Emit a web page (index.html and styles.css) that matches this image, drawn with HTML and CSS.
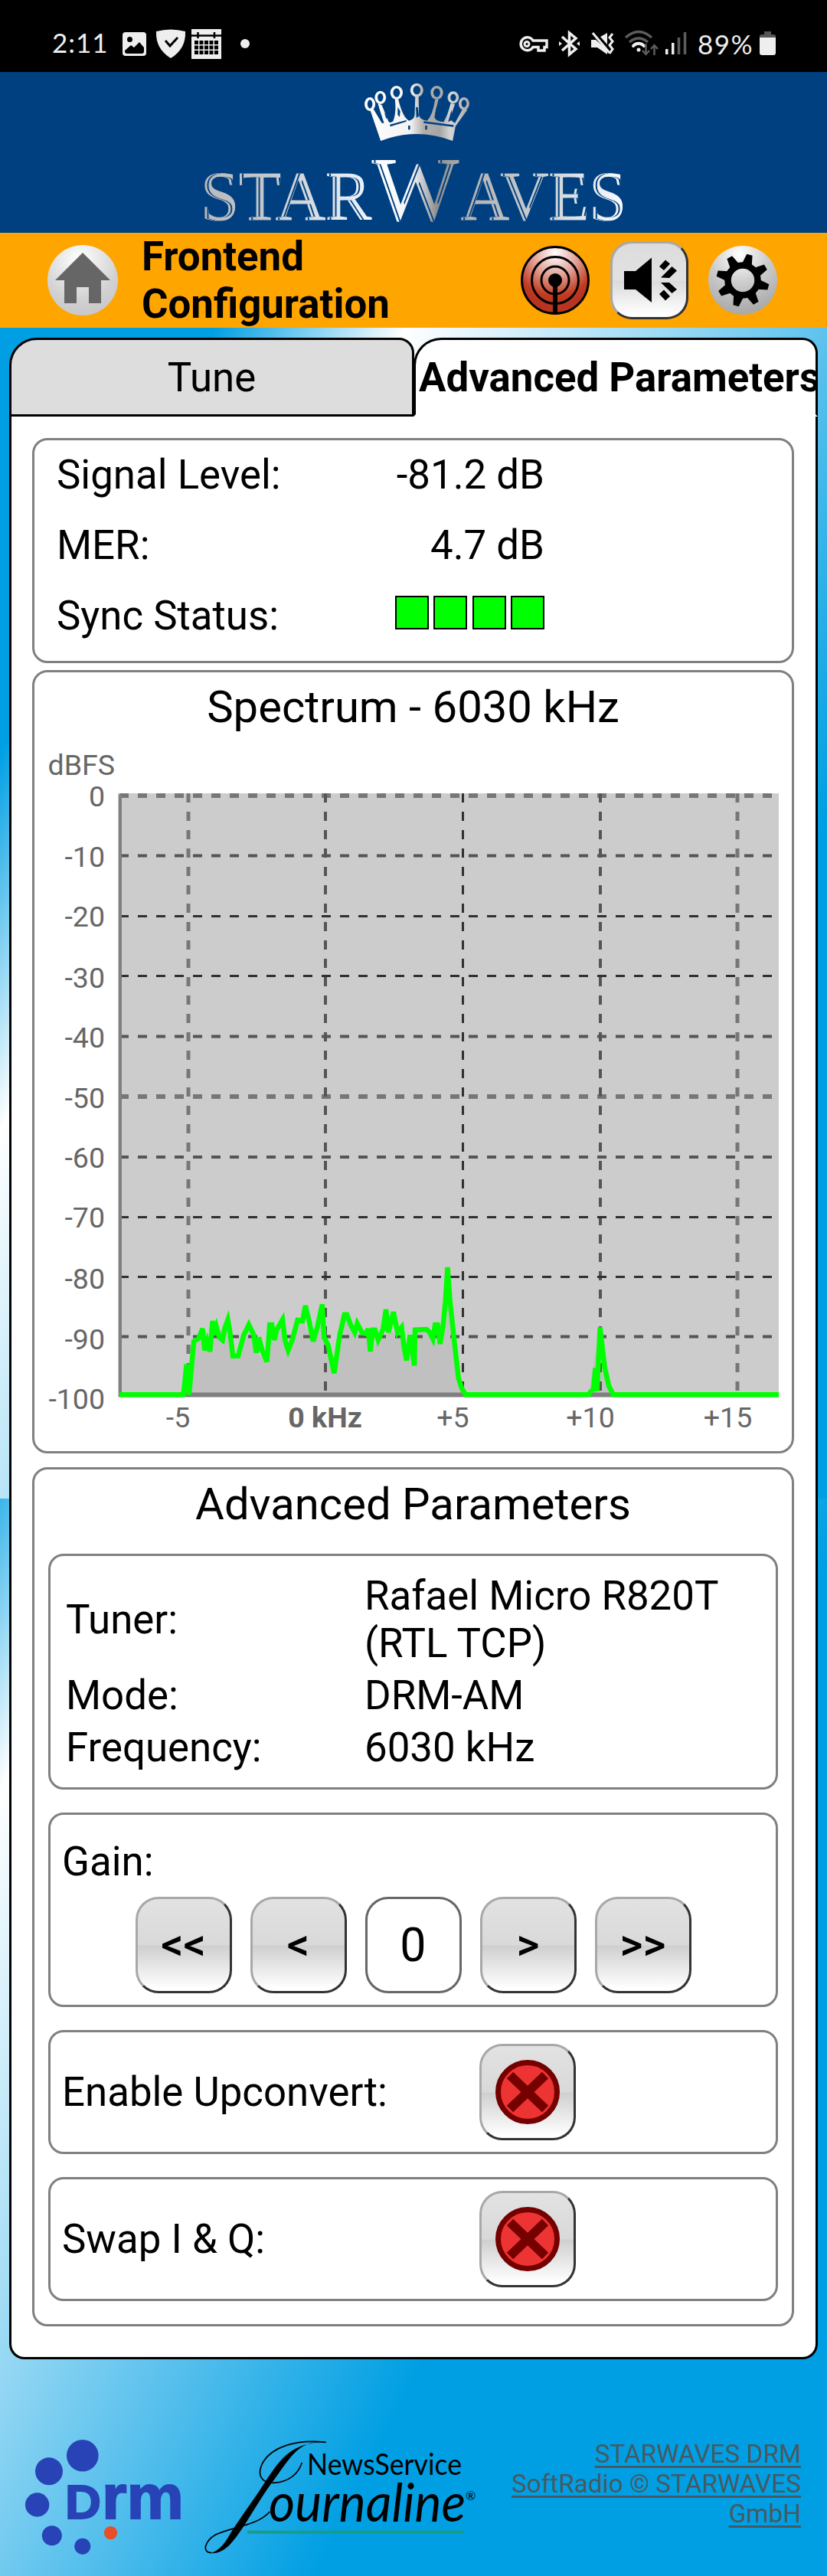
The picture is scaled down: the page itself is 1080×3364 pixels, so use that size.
FILE: index.html
```html
<!DOCTYPE html>
<html lang="en">
<head>
<meta charset="utf-8">
<title>Frontend Configuration</title>
<link rel="stylesheet" href="styles.css">
</head>
<body>
<div class="status">
  <span class="clock">2:11</span>
  <svg class="status-left" viewBox="160 36 168 44" width="168" height="44">
    <g fill="#eee">
      <rect x="160" y="42" width="31" height="31" rx="4"/>
      <path d="M204 41Q223 36 242 41Q243 64 223 76Q203 64 204 41Z"/>
      <rect x="250" y="38" width="39" height="39"/>
      <circle cx="320" cy="57" r="6"/>
    </g>
    <circle cx="169.500" cy="51.500" r="3.500"/>
    <path d="M163 66L171 59L175 62L182 55L188 62V67Q188 70 185 70H166Q163 70 163 67Z"/>
    <path d="M216 53L222 60L232 49" fill="none" stroke="#000" stroke-width="3"/>
    <path d="M250 46.500H289M258.500 42V50M280 42V50" stroke="#000" stroke-width="2.500"/>
    <path d="M254 55.500H285M254 62H285M254 68.500H285" stroke="#000" stroke-width="5" stroke-dasharray="5 1.500"/>
  </svg>
  <svg class="status-right" viewBox="676 38 224 36" width="224" height="36">
    <g fill="none" stroke="#eee" stroke-width="3.500">
      <path d="M696 53A8.500 8.500 0 1 0 696 61.500H703V66H711V61.500H714V53Z"/>
      <circle cx="688" cy="57.500" r="3" stroke-width="3"/>
      <path d="M734 48L752 64L743.500 71V43L752 50L734 66"/>
      <path d="M800 44L796 49L800 54L796 59L800 64L796 70" stroke-width="3"/>
      <path d="M774 43L796 69" stroke-width="3"/>
      <path d="M827 60A9 9 0 0 1 841 60" stroke-linecap="round" stroke-width="4"/>
    </g>
    <g fill="#eee">
      <path d="M730 54L734 57L730 60ZM757 54L753 57L757 60Z"/>
      <path d="M772 52H778L793 65V71L780 62H772ZM784 48L793 43V58Z"/>
      <circle cx="834" cy="65" r="2.500"/>
      <rect x="869" y="64" width="3.500" height="7"/><rect x="877" y="56" width="3.500" height="15"/>
    </g>
    <g fill="none" stroke="#5c5c5c" stroke-width="3.500">
      <path d="M817 49Q834 34 851 49M822 55Q834 45 846 55"/>
      <path d="M843.500 57V70M839 66L843.500 71L848 66M854.500 72V60M850 64L854.500 59L859 64" stroke-width="2.500"/>
      <path d="M886.500 49V71M894.500 42V71"/>
    </g>
  </svg>
  <span class="percent">89%</span>
  <svg class="battery" viewBox="992 41 21 31" width="21" height="31">
    <path d="M992 50V47Q992 45 995 45H998V41H1007V45H1010Q1013 45 1013 47V50Z" fill="#555"/>
    <path d="M992 49H1013V69Q1013 72 1010 72H995Q992 72 992 69Z" fill="#eee"/>
  </svg>
</div>

<div class="brand">
  <svg viewBox="250 94 580 210" width="580" height="210">
    <defs>
      <linearGradient id="silver" gradientUnits="userSpaceOnUse" x1="265" y1="0" x2="815" y2="0">
        <stop offset="0" stop-color="#b9b9bb"/><stop offset=".15" stop-color="#c4c8cd"/><stop offset=".38" stop-color="#eaf1f8"/>
        <stop offset=".43" stop-color="#fff"/><stop offset=".5" stop-color="#eef1f4"/><stop offset=".555" stop-color="#8e8e8e"/>
        <stop offset=".62" stop-color="#b0b0b0"/><stop offset=".8" stop-color="#c9ced4"/><stop offset="1" stop-color="#f8fbff"/>
      </linearGradient>
      <linearGradient id="crown" gradientUnits="userSpaceOnUse" x1="610" y1="0" x2="980" y2="0">
        <stop offset="0" stop-color="#fff"/><stop offset=".44" stop-color="#f3f3f3"/><stop offset=".56" stop-color="#b5b0ac"/>
        <stop offset=".72" stop-color="#a5a5a5"/><stop offset=".82" stop-color="#d5d5d5"/><stop offset="1" stop-color="#ababab"/>
      </linearGradient>
      <filter id="inline" x="-5%" y="-5%" width="110%" height="110%">
        <feOffset in="SourceAlpha" dx="3.200" result="a"/>
        <feOffset in="SourceAlpha" dx="4.600" result="b"/>
        <feComposite in="a" in2="b" operator="out" result="band"/>
        <feComposite in="SourceGraphic" in2="band" operator="out"/>
      </filter>
    </defs>
    <g transform="translate(250 90) scale(.37 .3333)">
      <path fill="url(#crown)" d="M668 282Q795 228 922 282L932 225L974 160L958 155L930 212Q912 200 914 190L930 138L915 134Q905 180 890 208Q862 205 858 190Q864 150 872 120L860 120Q852 180 832 203Q806 200 803 180L802 108H790L788 180Q786 198 768 203Q745 190 730 118L718 118Q724 170 712 205Q700 215 695 205L672 142L658 134Q668 180 672 208L650 160L630 158Z"/>
      <path fill="#004080" d="M644 160L660 145L680 212H672ZM680 170L692 190L688 196ZM728 150L737 165L735 188L728 180ZM792 150H799L803 185L794 192ZM864 150L866 185L858 190ZM918 160L920 200L906 208ZM765 222H772V238H765ZM825 222H832V238H825ZM700 218L760 200L757 207L702 226ZM820 205L925 220V227L820 212Z"/>
      <g fill="#004080" stroke="url(#crown)" stroke-width="10">
        <ellipse cx="630" cy="138" rx="14" ry="22"/><ellipse cx="667" cy="112" rx="15" ry="21"/><ellipse cx="724" cy="93" rx="17" ry="22"/>
        <ellipse cx="795.500" cy="83" rx="18" ry="22"/><ellipse cx="866" cy="93" rx="17" ry="22"/><ellipse cx="924" cy="112" rx="15" ry="19"/><ellipse cx="962" cy="136" rx="14" ry="20"/>
      </g>
    </g>
    <g class="brand-text" fill="url(#silver)" stroke="url(#silver)" stroke-width="1.200" filter="url(#inline)">
      <text x="262" y="287" font-size="90" textLength="223" lengthAdjust="spacingAndGlyphs">STAR</text>
      <text x="486" y="287" font-size="119" textLength="113" lengthAdjust="spacingAndGlyphs">W</text>
      <text x="602" y="287" font-size="90" textLength="216" lengthAdjust="spacingAndGlyphs">AVES</text>
    </g>
  </svg>
</div>

<header class="bar">
  <svg class="home" viewBox="61 319 94 94" width="94" height="94">
    <defs><radialGradient id="hg" cx=".45" cy=".2" r=".8"><stop offset="0" stop-color="#fff"/><stop offset=".7" stop-color="#d2d2d2"/><stop offset="1" stop-color="#c8c8c8"/></radialGradient></defs>
    <circle cx="108" cy="366" r="46" fill="url(#hg)"/>
    <path d="M108 330L144 366H132V396H116V375H100V396H84V366H72Z" fill="#666"/>
  </svg>
  <h1>Frontend<br>Configuration</h1>
  <div class="tools">
    <svg viewBox="680 320 92 92" width="92" height="92">
      <defs><radialGradient id="ag" cx=".5" cy=".1" r=".75"><stop offset="0" stop-color="#fff"/><stop offset=".45" stop-color="#e2a094"/><stop offset=".85" stop-color="#c23a20"/><stop offset="1" stop-color="#b83420"/></radialGradient></defs>
      <g fill="none" stroke="#000" stroke-width="3">
        <circle cx="726" cy="366" r="43.500" fill="url(#ag)"/><circle cx="726" cy="366" r="30.500"/><circle cx="726" cy="366" r="18"/>
        <path d="M726 366V410" stroke-width="6"/>
      </g>
      <circle cx="726" cy="366" r="9"/>
    </svg>
    <div class="key sound">
      <svg viewBox="802 319 94 94" width="94" height="94">
        <path d="M816 354H831L852 336.500V395L831 378H816ZM862 348L870 339.500L876 344.500L868 353ZM864 362.500L878.500 348L885 353.500L875 363ZM864 369L875 369L885 378L878.500 383ZM862 384L868 378.500L876 387L870 392.500Z"/>
      </svg>
    </div>
    <svg viewBox="926 320 92 92" width="92" height="92">
      <defs><radialGradient id="gg" cx=".45" cy=".12" r=".85"><stop offset="0" stop-color="#fff"/><stop offset=".5" stop-color="#ccc"/><stop offset="1" stop-color="#aaa"/></radialGradient></defs>
      <circle cx="972" cy="366" r="45" fill="url(#gg)"/>
      <circle cx="972" cy="366" r="19.500" fill="none" stroke="#000" stroke-width="8.500"/>
      <g transform="translate(972 366) rotate(15)">
        <path id="tooth" d="M-6.500 -21L-3.800 -34.500H3.800L6.500 -21Z"/>
        <use href="#tooth" transform="rotate(45)"/><use href="#tooth" transform="rotate(90)"/><use href="#tooth" transform="rotate(135)"/><use href="#tooth" transform="rotate(180)"/><use href="#tooth" transform="rotate(225)"/><use href="#tooth" transform="rotate(270)"/><use href="#tooth" transform="rotate(315)"/>
      </g>
    </svg>
  </div>
</header>

<main class="page">
  <nav class="tabs">
    <div class="tab">Tune</div>
    <div class="tab active">Advanced Parameters</div>
  </nav>
  <div class="panel">
    <section class="card signal">
      <div class="reading"><span>Signal Level:</span><span class="value">-81.2 dB</span></div>
      <div class="reading"><span>MER:</span><span class="value">4.7 dB</span></div>
      <div class="reading"><span>Sync Status:</span><span class="lights"><i></i><i></i><i></i><i></i></span></div>
    </section>

    <section class="card spectrum">
      <h2>Spectrum - 6030 kHz</h2>
      <svg class="chart" viewBox="45 957 989 937" width="989" height="937">
        <rect x="154" y="1036" width="863" height="788" fill="#ccc"/>
        <g transform="translate(200 1600) scale(.40816 .33333)"><path fill="#c0c0c0" d="M97 664L107 545L115 664L130 455L145 445L158 405L165 490L190 420L240 400L255 512H272L306 390L330 500L364 535L380 390L388 450L414 370L432 490L462 372H478L512 455L541 310L560 470L579 580L597 430L616 350L645 420L688 420L695 495L720 450L753 420L782 420L803 480L811 530L822 430L836 550L838 410H875L895 445L918 465L942 165L965 470L977 600L1000 664ZM1392 664L1430 400L1472 664Z"/></g>
        <g fill="none" stroke-dasharray="12 12">
          <g stroke="#777" stroke-width="5"><path d="M246 1036V1820M963 1036V1820"/><path d="M156 1039H1017M156 1432H1017" stroke-width="6"/></g>
          <g stroke="#555" stroke-width="4"><path d="M425 1036V1820M784 1036V1820M156 1117.500H1017M156 1353.500H1017M156 1511H1017M156 1745.500H1017"/></g>
          <g stroke="#303030" stroke-width="3"><path d="M604.500 1036V1820M156 1196.500H1017M156 1274.500H1017M156 1589.500H1017M156 1667.500H1017"/></g>
        </g>
        <path d="M157 1038V1824" stroke="#808080" stroke-width="4"/>
        <path d="M155 1821.500H1017" stroke="#808080" stroke-width="6"/>
        <g transform="translate(200 1600) scale(.40816 .33333)"><path fill="none" stroke="#0f0" stroke-width="6.500" stroke-miterlimit="4" vector-effect="non-scaling-stroke" d="M-108 664H97L107 545L115 664L130 455L145 445L158 405L165 490L173 455L182 495L190 375L197 430L203 400L212 440L222 450L230 400L239 370L246 420L255 512H272L290 430L306 390L322 430L330 500L338 440L350 495L364 535L373 390H380L388 450L395 410L414 370L422 450L432 490L445 450L462 372L478 375L487 315L498 370L512 455L525 400L541 310L547 440L560 470L579 580L597 430L612 350H620L632 390L645 420L653 385L668 420L682 425L688 405L695 495L703 410H710L720 450L735 410L745 330L753 420L769 340L782 420L795 400L803 480L811 530L822 430L836 550L838 410L875 408L885 420L895 445L902 390H910L918 465L928 390L935 300L942 165L950 300L965 470L977 600L988 640L1000 664H1392L1409 640L1415 560L1420 650L1430 400L1445 560L1458 630L1472 664H2002"/></g>
        <g class="axis">
          <text x="62.500" y="1012">dBFS</text>
          <g text-anchor="end">
            <text x="137" y="1053">0</text><text x="137" y="1131.500">-10</text><text x="137" y="1210">-20</text><text x="137" y="1290">-30</text><text x="137" y="1368">-40</text><text x="137" y="1446.500">-50</text><text x="137" y="1525">-60</text><text x="137" y="1603">-70</text><text x="137" y="1683">-80</text><text x="137" y="1761.500">-90</text><text x="137" y="1840">-100</text>
          </g>
          <g text-anchor="middle">
            <text x="232.500" y="1864">-5</text><text x="424.500" y="1864" font-weight="700">0 kHz</text><text x="591.500" y="1864">+5</text><text x="771" y="1864">+10</text><text x="950.500" y="1864">+15</text>
          </g>
        </g>
      </svg>
    </section>

    <section class="card advanced">
      <h2>Advanced Parameters</h2>
      <div class="card info">
        <span>Tuner:</span><span>Rafael Micro R820T<br>(RTL TCP)</span>
        <span>Mode:</span><span>DRM-AM</span>
        <span>Frequency:</span><span>6030 kHz</span>
      </div>
      <div class="card gain">
        <div>Gain:</div>
        <div class="keys">
          <div class="key">&lt;&lt;</div><div class="key">&lt;</div><div class="key number">0</div><div class="key">&gt;</div><div class="key">&gt;&gt;</div>
        </div>
      </div>
      <div class="card option">
        <span>Enable Upconvert:</span>
        <div class="key"><svg viewBox="0 0 84 84" width="84" height="84"><circle cx="42" cy="42" r="38.500" fill="#ee3333" stroke="#740000" stroke-width="7"/><path d="M19 20L65 64M65 20L19 64" stroke="#740000" stroke-width="12"/></svg></div>
      </div>
      <div class="card option">
        <span>Swap I &amp; Q:</span>
        <div class="key"><svg viewBox="0 0 84 84" width="84" height="84"><circle cx="42" cy="42" r="38.500" fill="#ee3333" stroke="#740000" stroke-width="7"/><path d="M19 20L65 64M65 20L19 64" stroke="#740000" stroke-width="12"/></svg></div>
      </div>
    </section>
  </div>
</main>

<footer class="footer">
  <svg class="logos" viewBox="30 3180 600 160" width="600" height="160">
    <g fill="#2843b5">
      <circle cx="107.800" cy="3206.700" r="20.800"/><circle cx="64" cy="3227.300" r="18"/><circle cx="48.600" cy="3271" r="15.700"/><circle cx="67.800" cy="3311.300" r="13"/><circle cx="107.800" cy="3325.300" r="10.600"/>
      <g class="drm"><text x="85" y="3289" font-size="63" textLength="47" lengthAdjust="spacingAndGlyphs">D</text><text x="133" y="3289" font-size="82" textLength="107" lengthAdjust="spacingAndGlyphs">rm</text></g>
    </g>
    <circle cx="144.500" cy="3307.700" r="8.600" fill="#e84e27"/>
    <path d="M323 3306.700H606" stroke="#189c85" stroke-width="4"/>
    <g class="journal">
      <text x="401" y="3231.500" font-size="38" textLength="202" lengthAdjust="spacingAndGlyphs">NewsService</text>
      <text x="351" y="3292.500" font-size="70" font-style="italic" textLength="257" lengthAdjust="spacingAndGlyphs">ournaline</text>
      <text x="608" y="3265" font-size="16">®</text>
    </g>
    <g transform="translate(0 3160) scale(.40816 .33333)">
      <path d="M1043 86C950 80 930 150 868 250C820 330 780 430 735 490C715 515 690 528 672 521C690 522 715 495 735 450C770 380 820 300 850 240C900 150 930 90 1043 86Z"/>
      <path fill="none" stroke="#000" stroke-width="1.700" vector-effect="non-scaling-stroke" d="M1043 88C940 75 870 110 842 165C820 215 835 247 875 247C925 245 955 210 966 168M676 521C645 520 655 475 690 450C740 420 825 415 863 360"/>
    </g>
  </svg>
  <a class="credit">STARWAVES DRM SoftRadio © STARWAVES GmbH</a>
</footer>
</body>
</html>
```
FILE: styles.css
```css
* { box-sizing: border-box; }
body {
  margin: 0;
  width: 1080px;
  height: 3364px;
  overflow: hidden;
  font: 52.8px/62px Roboto, sans-serif;
  color: #000;
  background:
    linear-gradient(116.75deg, #009fe3 250px, #fff 473px, #009fe3 1250px) 0 428px / 1080px 1529px no-repeat,
    linear-gradient(116.75deg, #009fe3 -51px, #fff 172px, #009fe3 1000px) 0 1957px / 1080px 1407px no-repeat;
}
svg { display: block; flex: none; overflow: visible; }

.status { height: 94px; background: #000; color: #eee; display: flex; padding-left: 68px; font: 35px/40px Lato, sans-serif; }
.clock { width: 92px; padding-top: 35px; letter-spacing: 1px; white-space: nowrap; }
.status-left { margin-top: 36px; }
.status-right { margin: 38px 0 0 348px; }
.percent { width: 81px; margin-left: 11px; padding-top: 37px; font-size: 35px; letter-spacing: 1.500px; white-space: nowrap; }
.battery { margin-top: 41px; }

.brand { height: 210px; background: #004080; display: flex; justify-content: center; }
.brand-text { font-family: "Liberation Serif", serif; }

.bar { height: 124px; background: #ffa500; display: flex; padding-left: 61px; }
.home { margin-top: 15px; }
h1 { margin: 0 0 0 30px; width: 494px; font-size: 52.8px; line-height: 62px; font-weight: 700; }
.tools { display: flex; padding-top: 11px; }
.tools > svg { margin-top: 5px; }

.key {
  width: 126px; height: 126px; flex: none;
  display: flex; align-items: center; justify-content: center;
  border: 3px solid; border-color: #a8a8a8 #333 #333 #a8a8a8;
  border-radius: 30px;
  background: linear-gradient(#e2e2e2, #d9d9d9 50%, #cfcfcf 51%, #fff 97%);
  font-size: 57.6px;
  font-weight: 500;
}
.key.sound { width: 102px; height: 102px; margin: 0 25px 0 26px; border-radius: 28px; background: linear-gradient(#dcdcdc, #e2e2e2 50%, #dadada 51%, #fff 97%); }
.key.number { background: #fff; border-color: #666; font-size: 61px; font-weight: 400; }

.page { padding: 13px 12px 0; }
.tabs { display: flex; }
.tab { width: 529px; height: 103px; border: 3px solid #000; border-radius: 36px 20px 0 0; background: #ddd; text-align: center; padding-top: 18px; }
.tab.active { width: 528px; margin-left: -1px; padding-left: 4px; background: #fff; border-bottom-color: #fff; font-weight: 700; text-align: left; white-space: nowrap; overflow: hidden; }

.panel { height: 2537px; padding: 28px 28px 0 27px; background: #fff; border: 3px solid #000; border-top: 0; border-radius: 0 0 20px 20px; }
.card { border: 3px solid #808080; border-radius: 20px; }
h2 { margin: 0; font-size: 58px; line-height: 68px; font-weight: 400; text-align: center; }

.signal { height: 294px; padding: 14px 0 0 29px; }
.reading { display: flex; height: 92px; }
.reading > :first-child { width: 342px; }
.value { width: 295px; text-align: right; }
.lights { display: flex; gap: 6.3px; padding: 5px 0 0 100px; }
.lights i { width: 44px; height: 44px; background: #0f0; border: 2.500px solid #000; }

.spectrum { height: 1023px; margin-top: 9px; padding-top: 11px; }
.axis { font: 37.5px Roboto, sans-serif; fill: #666; }

.advanced { height: 1122px; margin-top: 18px; padding: 11px 18px 0; }
.info { height: 308px; margin-top: 31px; padding: 21px 0 0 20px; display: grid; grid-template-columns: 390px 1fr; row-gap: 6px; align-content: start; align-items: center; }
.gain { height: 254px; margin-top: 30px; padding: 30px 15px 0; }
.keys { display: flex; justify-content: center; gap: 24px; margin-top: 15px; }
.option { height: 162px; margin-top: 30px; padding-left: 15px; display: flex; align-items: center; }
.option > span { width: 545px; }

.footer { display: flex; justify-content: space-between; padding: 99px 34px 0 30px; }
.credit { width: 400px; padding-top: 5px; font-size: 33.3px; line-height: 39px; text-align: right; color: #465a63; text-decoration: underline; text-decoration-thickness: 3px; text-underline-offset: 4px; text-decoration-skip-ink: none; }
.drm { font-family: "Liberation Sans", sans-serif; font-weight: 700; stroke: #2843b5; stroke-width: 2px; }
.journal { font-family: Lato, sans-serif; }
```
